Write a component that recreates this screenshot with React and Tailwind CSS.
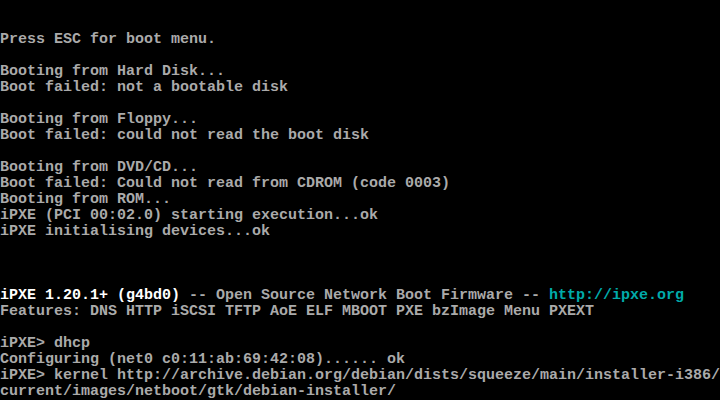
// Text-mode console: 80 columns x 25 rows, 9x16 cells
const ROWS = [
  '',
  '',
  'Press ESC for boot menu.',
  '',
  'Booting from Hard Disk...',
  'Boot failed: not a bootable disk',
  '',
  'Booting from Floppy...',
  'Boot failed: could not read the boot disk',
  '',
  'Booting from DVD/CD...',
  'Boot failed: Could not read from CDROM (code 0003)',
  'Booting from ROM...',
  'iPXE (PCI 00:02.0) starting execution...ok',
  'iPXE initialising devices...ok',
  '',
  '',
  '',
  null, // banner line, coloured
  'Features: DNS HTTP iSCSI TFTP AoE ELF MBOOT PXE bzImage Menu PXEXT',
  '',
  'iPXE> dhcp',
  'Configuring (net0 c0:11:ab:69:42:08)...... ok',
  'iPXE> kernel http://archive.debian.org/debian/dists/squeeze/main/installer-i386/',
  'current/images/netboot/gtk/debian-installer/',
];

function Row({ text }) {
  if (text === null) {
    return (
      <div className="h-4 whitespace-pre">
        <span className="text-white">iPXE 1.20.1+ (g4bd0)</span>
        <span> -- Open Source Network Boot Firmware -- </span>
        <span className="text-[#00aaaa]">http://ipxe.org</span>
      </div>
    );
  }
  return <div className="h-4 whitespace-pre">{text}</div>;
}

export default function App() {
  return (
    <div className="w-[720px] h-[400px] bg-black overflow-hidden text-[#aaaaaa] font-bold text-[15px] leading-4 font-['Liberation_Mono',monospace]">
      {ROWS.map((r, i) => (
        <Row key={i} text={r} />
      ))}
    </div>
  );
}
